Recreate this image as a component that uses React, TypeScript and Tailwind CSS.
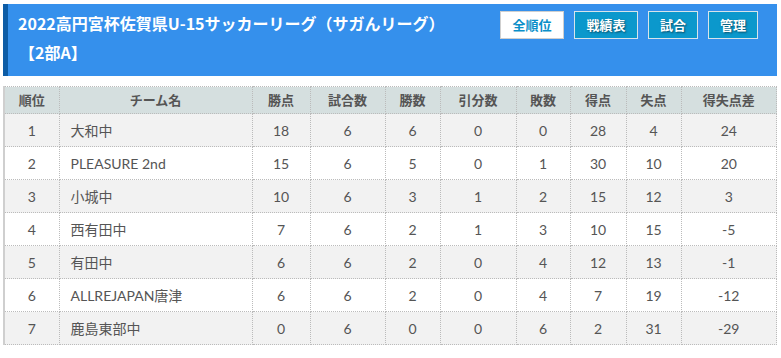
import React from 'react';

const rows = [
  ['1', '大和中', '18', '6', '6', '0', '0', '28', '4', '24'],
  ['2', 'PLEASURE 2nd', '15', '6', '5', '0', '1', '30', '10', '20'],
  ['3', '小城中', '10', '6', '3', '1', '2', '15', '12', '3'],
  ['4', '西有田中', '7', '6', '2', '1', '3', '10', '15', '-5'],
  ['5', '有田中', '6', '6', '2', '0', '4', '12', '13', '-1'],
  ['6', 'ALLREJAPAN唐津', '6', '6', '2', '0', '4', '7', '19', '-12'],
  ['7', '鹿島東部中', '0', '6', '0', '0', '6', '2', '31', '-29'],
];

const heads = ['順位', 'チーム名', '勝点', '試合数', '勝数', '引分数', '敗数', '得点', '失点', '得失点差'];
const widths = ['w-[55px]', 'w-[193px]', 'w-[58px]', 'w-[75px]', 'w-[55px]', 'w-[76px]', 'w-[54px]', 'w-[56px]', 'w-[55px]', ''];

const App = () => {
  return (
    <div className="w-[781px] h-[358px] bg-white pt-1 px-[3px] font-['Lato','Noto_Sans_CJK_JP',sans-serif]">
      {/* Title bar */}
      <div className="h-[72px] w-[774px] bg-[#3590ec] border-l-[5px] border-[#0d5ca6] flex justify-between">
        <div className="pl-[10px] pt-[5px] text-white font-bold text-[16px] leading-[29px] font-['Noto_Sans_CJK_JP',sans-serif]">
          <div>2022高円宮杯佐賀県U-15サッカーリーグ（サガんリーグ）</div>
          <div className="ml-[1px]">【2部A】</div>
        </div>
        <div className="flex gap-[10px] pt-[7px] pr-[19px] font-['Noto_Sans_CJK_JP',sans-serif]">
          <button className="h-[28px] w-[64px] bg-white border border-[#cfcfcf] text-[#0a8fc9] text-[13px] font-bold">全順位</button>
          <button className="h-[28px] w-[64px] bg-[#0b98cc] border border-[#d8e4ea] text-white text-[13px] font-bold [text-shadow:1px_1px_2px_rgba(0,0,0,0.5)]">戦績表</button>
          <button className="h-[28px] w-[50px] bg-[#0b98cc] border border-[#d8e4ea] text-white text-[13px] font-bold [text-shadow:1px_1px_2px_rgba(0,0,0,0.5)]">試合</button>
          <button className="h-[28px] w-[50px] bg-[#0b98cc] border border-[#d8e4ea] text-white text-[13px] font-bold [text-shadow:1px_1px_2px_rgba(0,0,0,0.5)]">管理</button>
        </div>
      </div>

      {/* Standings table */}
      <table className="mt-[10px] w-[774px] border-collapse border-l-2 border-[#cfcfcf] text-[14px] text-[#555]">
        <thead>
          <tr className="bg-[#d5dfdf] h-[27px]">
            {heads.map((h, i) => (
              <th key={i} className={`${widths[i]} border border-dotted border-[#bbb] font-bold text-[#555] font-['Noto_Sans_CJK_JP',sans-serif] text-[13px]`}>
                {h}
              </th>
            ))}
          </tr>
        </thead>
        <tbody>
          {rows.map((r, ri) => (
            <tr key={ri} className={`h-[33px] ${ri % 2 === 0 ? 'bg-[#f2f2f2]' : 'bg-white'}`}>
              {r.map((c, ci) => (
                <td
                  key={ci}
                  className={`border border-dotted border-[#bbb] ${ci === 1 ? 'text-left pl-[11px]' : 'text-center'}`}
                >
                  {c}
                </td>
              ))}
            </tr>
          ))}
        </tbody>
      </table>
    </div>
  );
};

export default App;
